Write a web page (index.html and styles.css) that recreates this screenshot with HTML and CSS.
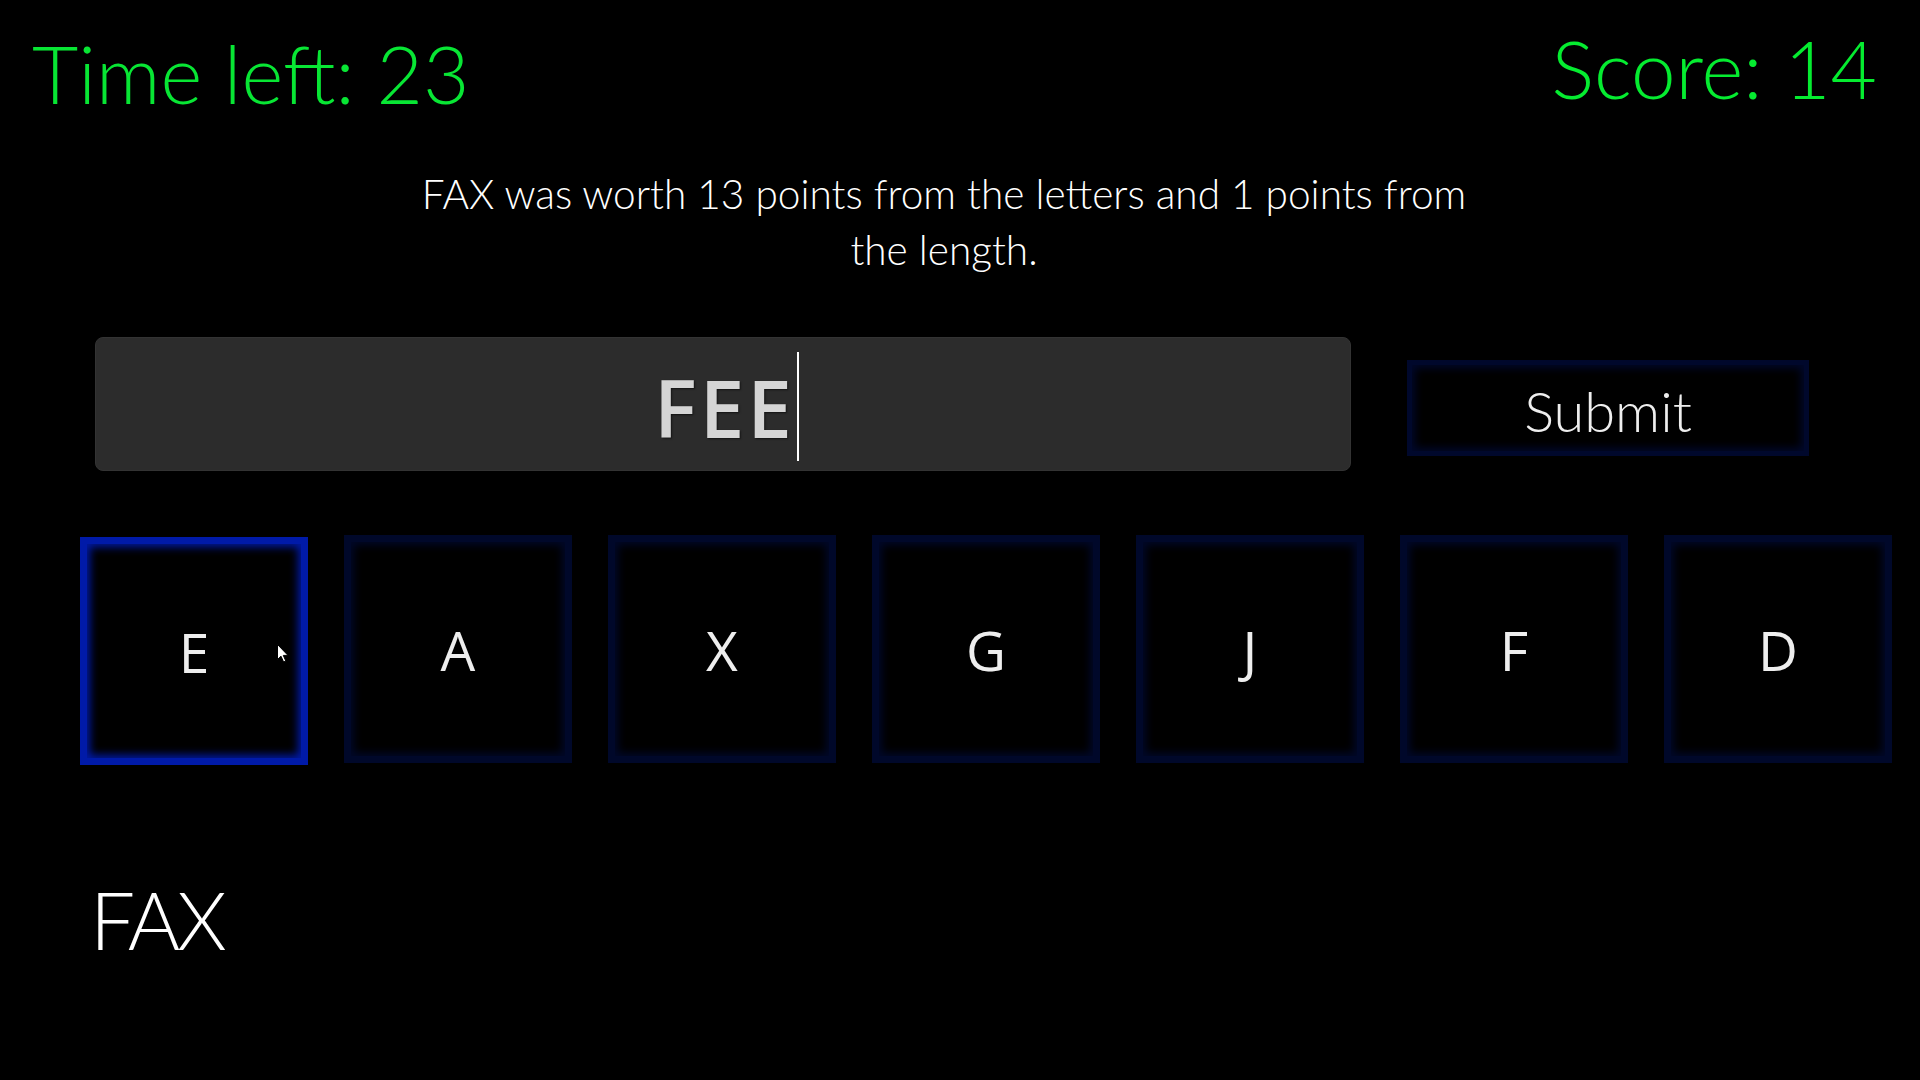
FILE: index.html
```html
<!DOCTYPE html>
<html lang="en">
<head>
<meta charset="utf-8">
<title>Word Game</title>
<link rel="stylesheet" href="styles.css">
</head>
<body>
  <header class="topbar">
    <div class="timer">Time left: 23</div>
    <div class="score">Score: 14</div>
  </header>

  <p class="message">FAX was worth 13 points from the letters and 1 points from the length.</p>

  <section class="entry-row">
    <div class="entry"><span class="typed">FEE</span><span class="caret"></span></div>
    <button class="submit" type="button">Submit</button>
  </section>

  <section class="tiles">
    <div class="tile selected">E
      <svg class="cursor" width="12" height="19" viewBox="0 0 12 19"><path d="M0.5 0.5 L0.5 15.5 L4 12.2 L6.6 18 L8.8 17 L6.3 11.4 L11 11.4 Z" fill="#fff" stroke="#000" stroke-width="1"/></svg>
    </div>
    <div class="tile">A</div>
    <div class="tile">X</div>
    <div class="tile">G</div>
    <div class="tile">J</div>
    <div class="tile">F</div>
    <div class="tile">D</div>
  </section>

  <div class="words">
    <div class="word">FAX</div>
  </div>
</body>
</html>
```

FILE: styles.css
```css
html, body {
  margin: 0;
  padding: 0;
  background: #000;
}

body {
  font-family: Lato, "Open Sans", sans-serif;
  color: #fff;
  width: 1920px;
  height: 1080px;
  overflow: hidden;
}

.topbar {
  display: flex;
  justify-content: space-between;
  align-items: flex-start;
  padding: 0 43px 0 32px;
  height: 121px;
}

.timer,
.score {
  font-size: 80px;
  line-height: 96px;
  font-weight: 300;
  color: #08e634;
}

.timer {
  margin-top: 25px;
}

.score {
  margin-top: 20px;
  color: #05ec30;
}

.message {
  box-sizing: border-box;
  max-width: 1112px;
  margin: 45px auto 0;
  padding-right: 32px;
  text-align: center;
  font-size: 40.6px;
  line-height: 56px;
  font-weight: 300;
  color: #fff;
}

.entry-row {
  display: flex;
  align-items: center;
  gap: 56px;
  padding-left: 95px;
  margin-top: 59px;
}

.entry {
  box-sizing: border-box;
  width: 1256px;
  height: 134px;
  padding: 4px 0 0 7px;
  background: #2c2c2c;
  border: 1px solid #333;
  border-radius: 8px;
  display: flex;
  align-items: center;
  justify-content: center;
}

.typed {
  font-family: "Open Sans", sans-serif;
  font-size: 80px;
  font-weight: 600;
  line-height: 109px;
  letter-spacing: 3px;
  color: #d5d5d5;
  text-shadow: 1px 1px 2px rgba(0, 0, 0, 0.6);
}

.caret {
  display: inline-block;
  width: 2px;
  height: 109px;
  margin-left: 2px;
  background: #fff;
}

.submit {
  box-sizing: border-box;
  width: 402px;
  height: 96px;
  margin-top: 8px;
  background: #000;
  border: 5px solid #00082c;
  box-shadow: inset 0 0 8px 3px #00082c;
  font-family: Lato, sans-serif;
  font-size: 56px;
  font-weight: 300;
  line-height: 1;
  color: #eee;
  padding: 5px 0 0;
}

.tiles {
  display: flex;
  gap: 36px;
  padding-left: 80px;
  margin-top: 64px;
}

.tile {
  position: relative;
  box-sizing: border-box;
  width: 228px;
  height: 228px;
  border: 7px solid #00082a;
  box-shadow: inset 0 0 8px 3px #00082a;
  display: flex;
  align-items: center;
  justify-content: center;
  font-family: "Open Sans", sans-serif;
  font-size: 55px;
  line-height: 1;
  color: #eee;
}

.tile.selected {
  border-color: #001aa8;
  box-shadow: inset 0 0 8px 3px #001aa8;
  margin-top: 2px;
}

.cursor {
  position: absolute;
  left: 190px;
  top: 100px;
}

.words {
  padding-left: 90px;
  margin-top: 106px;
}

.word {
  font-size: 80px;
  line-height: 96px;
  font-weight: 300;
  letter-spacing: -3px;
  color: #fff;
}
```
